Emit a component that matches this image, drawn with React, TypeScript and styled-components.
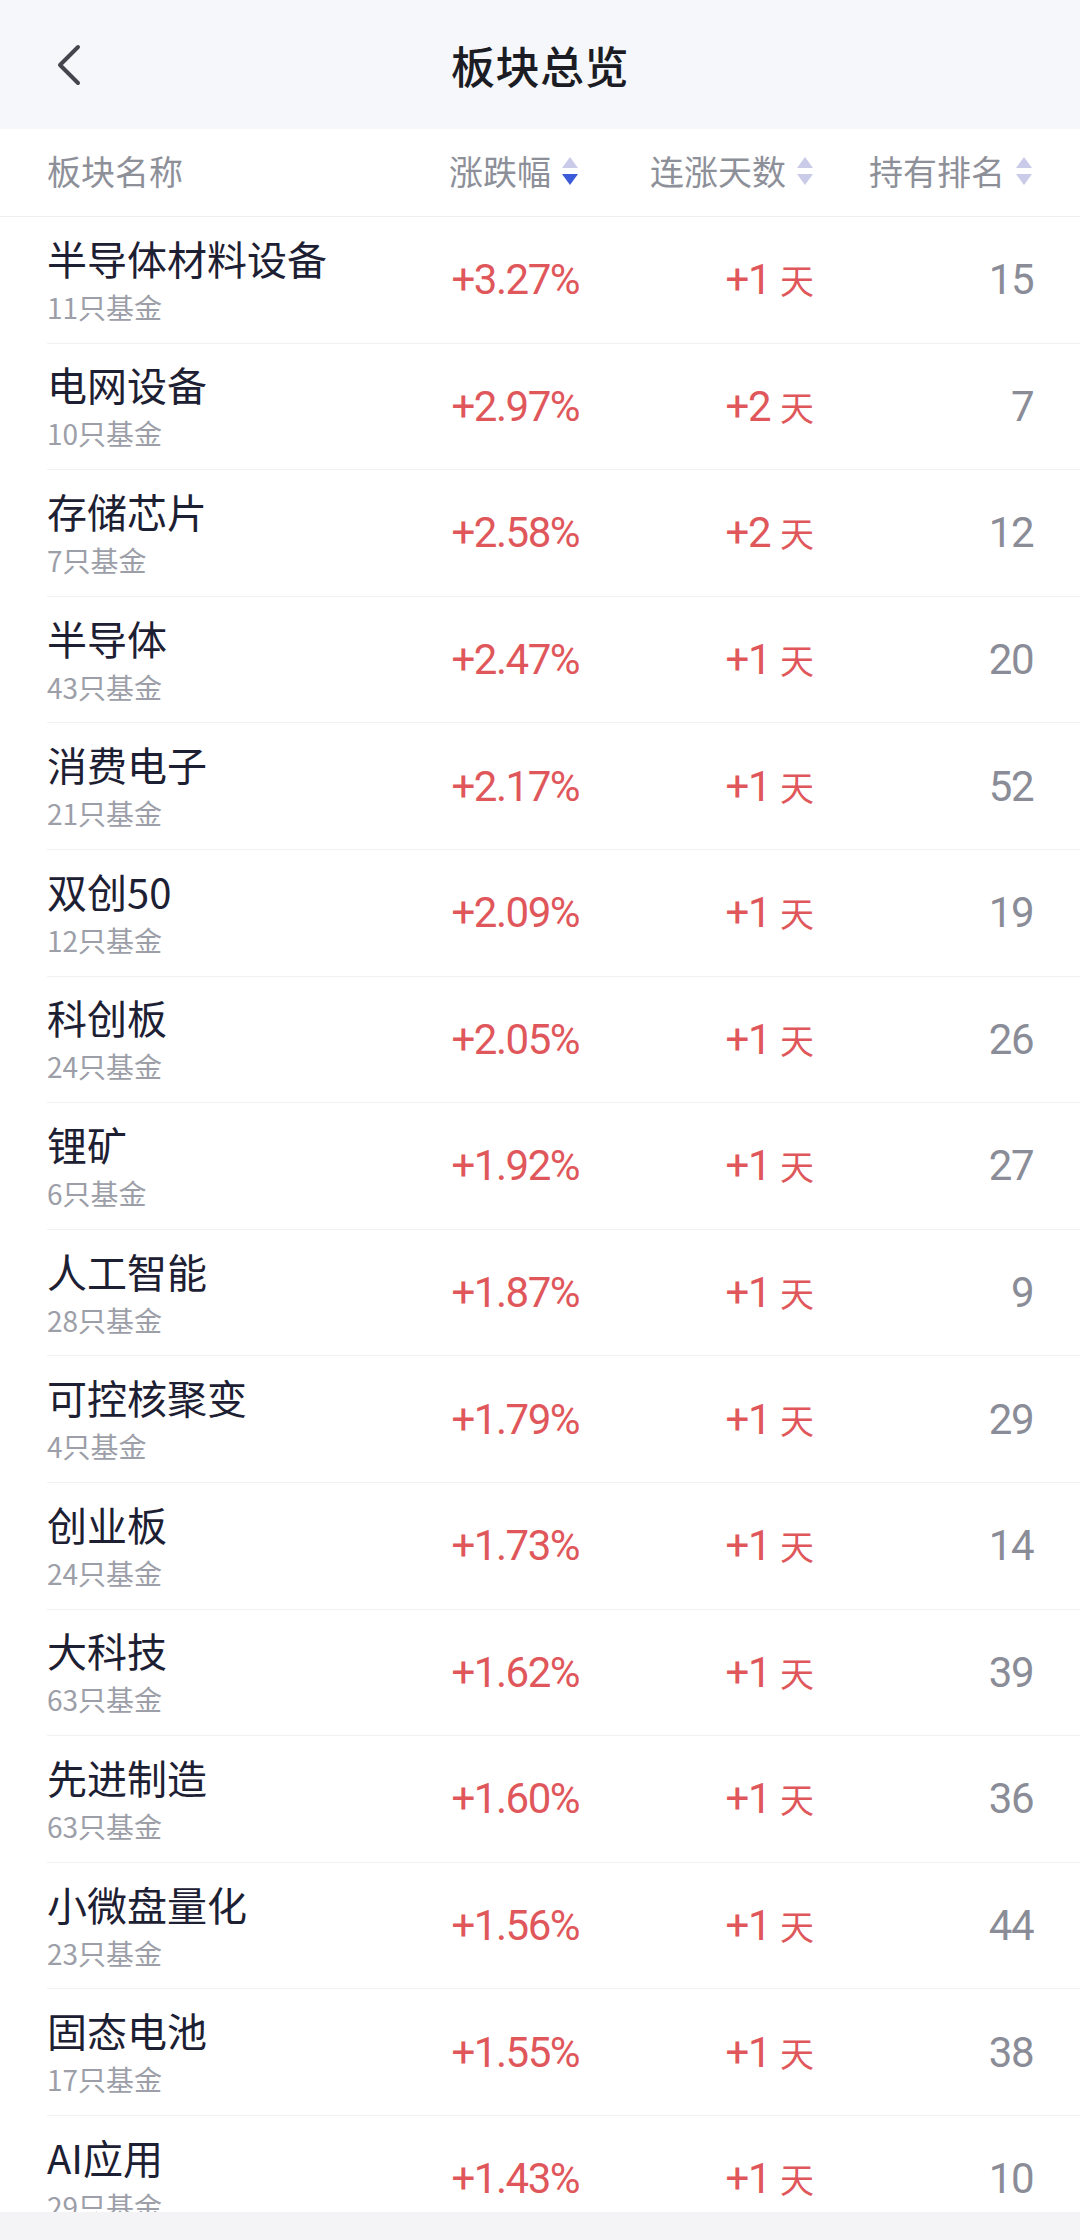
import React from "react";
import styled, { createGlobalStyle } from "styled-components";

type Sector = {
  name: string;
  funds: number;
  change: string;
  days: number;
  rank: number;
};

const sectors: Sector[] = [
  { name: "半导体材料设备", funds: 11, change: "+3.27%", days: 1, rank: 15 },
  { name: "电网设备", funds: 10, change: "+2.97%", days: 2, rank: 7 },
  { name: "存储芯片", funds: 7, change: "+2.58%", days: 2, rank: 12 },
  { name: "半导体", funds: 43, change: "+2.47%", days: 1, rank: 20 },
  { name: "消费电子", funds: 21, change: "+2.17%", days: 1, rank: 52 },
  { name: "双创50", funds: 12, change: "+2.09%", days: 1, rank: 19 },
  { name: "科创板", funds: 24, change: "+2.05%", days: 1, rank: 26 },
  { name: "锂矿", funds: 6, change: "+1.92%", days: 1, rank: 27 },
  { name: "人工智能", funds: 28, change: "+1.87%", days: 1, rank: 9 },
  { name: "可控核聚变", funds: 4, change: "+1.79%", days: 1, rank: 29 },
  { name: "创业板", funds: 24, change: "+1.73%", days: 1, rank: 14 },
  { name: "大科技", funds: 63, change: "+1.62%", days: 1, rank: 39 },
  { name: "先进制造", funds: 63, change: "+1.60%", days: 1, rank: 36 },
  { name: "小微盘量化", funds: 23, change: "+1.56%", days: 1, rank: 44 },
  { name: "固态电池", funds: 17, change: "+1.55%", days: 1, rank: 38 },
  { name: "AI应用", funds: 29, change: "+1.43%", days: 1, rank: 10 },
];

const CJK = `"Noto Sans CJK SC", "Noto Sans", sans-serif`;
const NUM = `Roboto, "Noto Sans CJK SC", sans-serif`;
const COLUMNS = "1fr 180px 235px 219px";

const GlobalStyle = createGlobalStyle`
  html, body {
    margin: 0;
    padding: 0;
    background: #ffffff;
    font-family: ${CJK};
  }
`;

const Page = styled.div`
  width: 1080px;
  height: 2240px;
  display: flex;
  flex-direction: column;
  overflow: hidden;
  background: #ffffff;
`;

const NavBar = styled.header`
  height: 129px;
  flex-shrink: 0;
  display: grid;
  grid-template-columns: 1fr auto 1fr;
  align-items: center;
  background: #f6f7fa;
`;

const BackButton = styled.button`
  justify-self: start;
  margin-left: 44px;
  width: 50px;
  height: 50px;
  padding: 0;
  border: none;
  background: transparent;
  display: flex;
  align-items: center;
  justify-content: center;
`;

const Title = styled.h1`
  margin: 0;
  font-size: 44px;
  font-weight: 500;
  color: #1b1c24;
  letter-spacing: 0.5px;
`;

const HeaderRow = styled.div`
  height: 88px;
  flex-shrink: 0;
  box-sizing: border-box;
  padding: 0 47px 4px;
  display: grid;
  grid-template-columns: ${COLUMNS};
  align-items: center;
  border-bottom: 1px solid #efeff3;
`;

const HeaderCell = styled.div<{ $right?: boolean }>`
  display: flex;
  align-items: center;
  justify-content: ${(p) => (p.$right ? "flex-end" : "flex-start")};
  gap: 10px;
  font-size: 34px;
  color: #8e9099;
  white-space: nowrap;
`;

const List = styled.div`
  flex: 1;
  overflow: hidden;
`;

const Row = styled.div`
  height: 126.6px;
  box-sizing: border-box;
  margin-left: 47px;
  padding-right: 47px;
  display: grid;
  grid-template-columns: ${COLUMNS};
  align-items: center;
  border-bottom: 1px solid #f1f1f4;
`;

const NameBlock = styled.div`
  display: flex;
  flex-direction: column;
  padding-bottom: 2px;
`;

const Name = styled.div`
  font-size: 40px;
  line-height: 56px;
  color: #1d2033;
  white-space: nowrap;
`;

const Sub = styled.div`
  font-size: 28px;
  line-height: 42px;
  color: #9c9ea8;
  white-space: nowrap;
`;

const Value = styled.div<{ $tone: "up" | "muted" }>`
  text-align: right;
  font-family: ${NUM};
  font-size: 42px;
  letter-spacing: -1.5px;
  color: ${(p) => (p.$tone === "up" ? "#e0575b" : "#8a8c97")};
  white-space: nowrap;
`;

const Unit = styled.span`
  font-family: ${CJK};
  font-size: 34px;
  letter-spacing: 0;
  margin-left: 10px;
`;

const BottomBar = styled.div`
  height: 28px;
  flex-shrink: 0;
  background: #f4f4f6;
`;

const SortIcon = ({ active }: { active?: "up" | "down" }) => (
  <svg width="18" height="30" viewBox="0 0 18 30">
    <path d="M9 1 L17 12 L1 12 Z" fill={active === "up" ? "#3b5bd8" : "#c9cbe8"} />
    <path d="M1 18 L17 18 L9 29 Z" fill={active === "down" ? "#3b5bd8" : "#c9cbe8"} />
  </svg>
);

const BackIcon = () => (
  <svg width="40" height="44" viewBox="0 0 40 44">
    <path
      d="M29 4 L11 22 L29 40"
      fill="none"
      stroke="#45464d"
      strokeWidth="4"
      strokeLinecap="round"
      strokeLinejoin="round"
    />
  </svg>
);

export default function App() {
  return (
    <>
      <GlobalStyle />
      <Page>
        <NavBar>
          <BackButton aria-label="返回">
            <BackIcon />
          </BackButton>
          <Title>板块总览</Title>
          <div />
        </NavBar>

        <HeaderRow>
          <HeaderCell>板块名称</HeaderCell>
          <HeaderCell $right>
            涨跌幅
            <SortIcon active="down" />
          </HeaderCell>
          <HeaderCell $right>
            连涨天数
            <SortIcon />
          </HeaderCell>
          <HeaderCell $right>
            持有排名
            <SortIcon />
          </HeaderCell>
        </HeaderRow>

        <List>
          {sectors.map((s) => (
            <Row key={s.name}>
              <NameBlock>
                <Name>{s.name}</Name>
                <Sub>{s.funds}只基金</Sub>
              </NameBlock>
              <Value $tone="up">{s.change}</Value>
              <Value $tone="up">
                +{s.days}
                <Unit>天</Unit>
              </Value>
              <Value $tone="muted">{s.rank}</Value>
            </Row>
          ))}
        </List>

        <BottomBar />
      </Page>
    </>
  );
}
